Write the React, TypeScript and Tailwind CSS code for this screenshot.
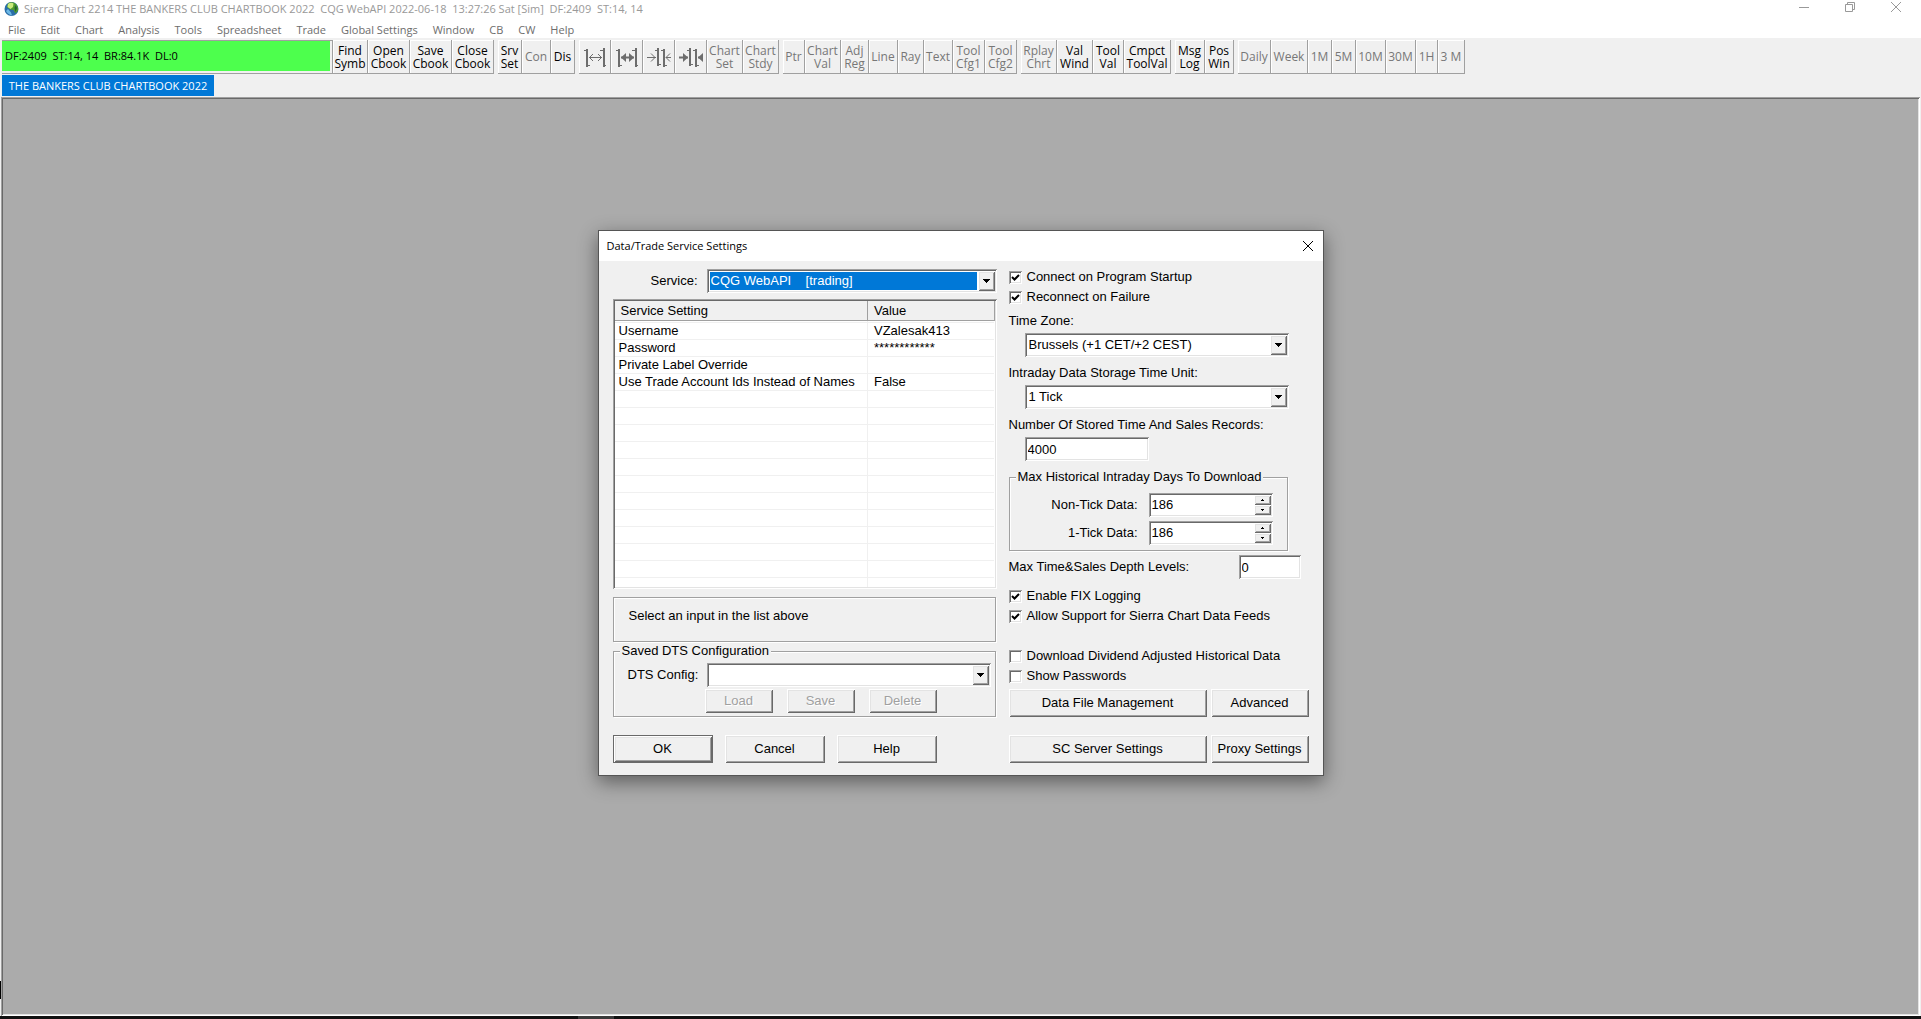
import { useState } from 'react';
import type { ReactNode } from 'react';

const SUNKEN =
  'p-[2px] bg-white shadow-[inset_1px_1px_#a0a0a0,inset_-1px_-1px_#ffffff,inset_2px_2px_#696969,inset_-2px_-2px_#e3e3e3]';
const RAISED =
  'bg-[#f0f0f0] shadow-[inset_1px_1px_#ffffff,inset_-1px_-1px_#696969,inset_2px_2px_#e3e3e3,inset_-2px_-2px_#a0a0a0]';
const ETCHED = 'border border-[#a0a0a0] shadow-[inset_1px_1px_#ffffff,1px_1px_#ffffff]';

interface ToolItem {
  label: string;
  width: string;
  active?: boolean;
  icon?: ReactNode;
}

const menuItems = [
  'File', 'Edit', 'Chart', 'Analysis', 'Tools', 'Spreadsheet', 'Trade',
  'Global Settings', 'Window', 'CB', 'CW', 'Help',
];

function BarsIcon({ inward, bold }: { inward?: boolean; bold?: boolean }) {
  return (
    <svg width="27" height="24" viewBox="0 0 27 24" fill="none" stroke="#6d6d6d" className="shrink-0">
      {inward ? (
        <>
          <path d="M13 3v18M19 4v18" strokeWidth="2" />
          <path d="M10 5.5h2M14 19.5h2M16 5.5h2M20 20.5h2" />
          <path d="M2 12.500h9M21 12.500h5" strokeWidth={bold ? 2 : 1} />
          {bold ? (
            <path d="M6 8l5 4.500l-5 4.500zM26 8l-5 4.500l5 4.500z" fill="#6d6d6d" stroke="none" />
          ) : (
            <path d="M6 8.500l4 4l-4 4M25 8.500l-4 4l4 4" />
          )}
        </>
      ) : (
        <>
          <path d="M6 4v18M23 3v19" strokeWidth="2" />
          <path d="M3 5.500h2M7 20.500h2M19 5.500h3M24 20.500h1" />
          <path d="M8 12.500h13" strokeWidth={bold ? 2 : 1} />
          {bold ? (
            <path d="M13 8l-5 4.500l5 4.500zM16 8l5 4.500l-5 4.500z" fill="#6d6d6d" stroke="none" />
          ) : (
            <path d="M12 9l-3.500 3.500l3.500 3.500M17 9l3.500 3.500l-3.500 3.500" />
          )}
        </>
      )}
    </svg>
  );
}

const toolGroups: ToolItem[][] = [
  [
    { label: 'Find\nSymb', width: 'w-[35px]', active: true },
    { label: 'Open\nCbook', width: 'w-[42px]', active: true },
    { label: 'Save\nCbook', width: 'w-[42px]', active: true },
    { label: 'Close\nCbook', width: 'w-[42px]', active: true },
  ],
  [
    { label: 'Srv\nSet', width: 'w-[24px]', active: true },
    { label: 'Con', width: 'w-[29px]' },
    { label: 'Dis', width: 'w-[24px]', active: true },
  ],
  [
    { label: 'Increase bar spacing', width: 'w-[32px]', icon: <BarsIcon /> },
    { label: 'Increase bar spacing more', width: 'w-[32px]', icon: <BarsIcon bold /> },
    { label: 'Decrease bar spacing', width: 'w-[32px]', icon: <BarsIcon inward /> },
    { label: 'Decrease bar spacing more', width: 'w-[32px]', icon: <BarsIcon inward bold /> },
    { label: 'Chart\nSet', width: 'w-[36px]' },
    { label: 'Chart\nStdy', width: 'w-[36px]' },
  ],
  [
    { label: 'Ptr', width: 'w-[22px]' },
    { label: 'Chart\nVal', width: 'w-[36px]' },
    { label: 'Adj\nReg', width: 'w-[28px]' },
    { label: 'Line', width: 'w-[29px]' },
    { label: 'Ray', width: 'w-[26px]' },
    { label: 'Text', width: 'w-[29px]' },
    { label: 'Tool\nCfg1', width: 'w-[32px]' },
    { label: 'Tool\nCfg2', width: 'w-[32px]' },
  ],
  [
    { label: 'Rplay\nChrt', width: 'w-[36px]' },
    { label: 'Val\nWind', width: 'w-[36px]', active: true },
    { label: 'Tool\nVal', width: 'w-[31px]', active: true },
    { label: 'Cmpct\nToolVal', width: 'w-[47px]', active: true },
  ],
  [
    { label: 'Msg\nLog', width: 'w-[30px]', active: true },
    { label: 'Pos\nWin', width: 'w-[29px]', active: true },
  ],
  [
    { label: 'Daily', width: 'w-[33px]' },
    { label: 'Week', width: 'w-[37px]' },
    { label: '1M', width: 'w-[24px]' },
    { label: '5M', width: 'w-[24px]' },
    { label: '10M', width: 'w-[30px]' },
    { label: '30M', width: 'w-[30px]' },
    { label: '1H', width: 'w-[22px]' },
    { label: '3 M', width: 'w-[27px]' },
  ],
];

const settings = [
  ['Username', 'VZalesak413'],
  ['Password', '************'],
  ['Private Label Override', ''],
  ['Use Trade Account Ids Instead of Names', 'False'],
];

function GlobeIcon() {
  return (
    <svg width="15" height="16" viewBox="0 0 15 16">
      <circle cx="7.500" cy="8" r="7" fill="#2a6ea8" />
      <path d="M2 10c1 2 3 4 6 4.500l-1-3L4 8z" fill="#6cb8e6" />
      <path d="M4 2.500C6 1 9 1 11 2.200C13.500 4 14.500 7 14 9.500l-2.500 3L9.500 9L6 8.500L3 6z" fill="#4f9c2c" />
      <path d="M4 3c2-1.500 4-1.500 5.500-.5L9 6L6.500 8L3.500 6z" fill="#c9ea7c" />
      <path d="M11.500 4l1.500 3l-1.500 4l-1-4z" fill="#1f6034" />
    </svg>
  );
}

function TitleBar() {
  return (
    <div className="flex h-[18px] items-center bg-white pl-1 pr-[2px] text-[#999999]">
      <GlobeIcon />
      <span className="ml-[5px] flex-1 whitespace-pre">
        Sierra Chart 2214 THE BANKERS CLUB CHARTBOOK 2022{'  '}CQG WebAPI 2022-06-18{'  '}13:27:26 Sat [Sim]{'  '}DF:2409{'  '}ST:14, 14
      </span>
      <button aria-label="Minimize" className="flex w-[46px] justify-center pb-1">
        <svg width="10" height="10" stroke="#999999"><path d="M0 5.500h10" /></svg>
      </button>
      <button aria-label="Restore" className="flex w-[46px] justify-center pb-1">
        <svg width="10" height="10" fill="none" stroke="#999999">
          <path d="M.5 2.500h7v7h-7zM2.500 2.500v-2h7v7h-2" />
        </svg>
      </button>
      <button aria-label="Close" className="flex w-[46px] justify-center pb-1">
        <svg width="10" height="10" stroke="#999999"><path d="M0 0l10 10M10 0l-10 10" /></svg>
      </button>
    </div>
  );
}

function Toolbar() {
  return (
    <div className="flex h-[37px] items-start pl-[2px] pt-[2px]">
      <div className="h-[34px] w-[331px] shrink-0 border-b border-r border-t border-[#a0a0a0] pb-[2px] pr-[2px]">
        <div className="flex h-full items-center whitespace-pre bg-[#4dff4d] pl-[3px] text-black">
          DF:2409{'  '}ST:14, 14{'  '}BR:84.1K{'  '}DL:0
        </div>
      </div>
      <div className="flex gap-1">
        {toolGroups.map((group, index) => (
          <div key={index} className="flex">
            {group.map((item) => (
              <button
                key={item.label}
                aria-label={item.label.replace('\n', ' ')}
                className={`flex h-[34px] items-center justify-center whitespace-pre border-b border-r border-[#a0a0a0] text-center text-[12px] leading-[13px] shadow-[inset_1px_1px_#ffffff] ${item.width} ${
                  item.active ? 'text-black' : 'text-[#777777]'
                }`}
              >
                {item.icon ?? item.label}
              </button>
            ))}
          </div>
        ))}
      </div>
    </div>
  );
}

function Combo({ id, options, selected, className }: { id: string; options: string[]; selected?: boolean; className: string }) {
  return (
    <div className={`flex h-6 ${SUNKEN} ${className}`}>
      <select
        id={id}
        className={`my-px ml-px min-w-0 flex-1 appearance-none whitespace-pre rounded-none px-px outline-none ${
          selected ? 'bg-[#0078d7] text-white' : 'bg-white'
        }`}
      >
        {options.map((option) => (
          <option key={option}>{option}</option>
        ))}
      </select>
      <span className={`pointer-events-none ml-px flex w-[17px] items-center justify-center ${RAISED}`}>
        <svg width="7" height="4" shapeRendering="crispEdges"><path d="M0 0h7L3.500 4z" /></svg>
      </span>
    </div>
  );
}

function TextBox({ id, value, className }: { id: string; value: string; className: string }) {
  return <input id={id} type="text" defaultValue={value} className={`h-6 px-[3px] outline-none ${SUNKEN} ${className}`} />;
}

function Spinner({ id, label }: { id: string; label: string }) {
  const [value, setValue] = useState(186);

  return (
    <div className="flex items-center justify-end">
      <label htmlFor={id} className="mr-[11px]">{label}</label>
      <div className={`flex h-6 w-[124px] ${SUNKEN}`}>
        <input
          id={id}
          type="text"
          value={value}
          onChange={(e) => setValue(Number(e.target.value) || 0)}
          className="min-w-0 flex-1 pl-px outline-none"
        />
        <div className="flex w-[17px] flex-col">
          <button aria-label="Increase" onClick={() => setValue(value + 1)} className={`flex flex-1 items-center justify-center ${RAISED}`}>
            <svg width="3" height="2" shapeRendering="crispEdges"><path d="M1 0h1v1H1zM0 1h3v1H0z" /></svg>
          </button>
          <button aria-label="Decrease" onClick={() => setValue(value - 1)} className={`flex flex-1 items-center justify-center ${RAISED}`}>
            <svg width="3" height="2" shapeRendering="crispEdges"><path d="M0 0h3v1H0zM1 1h1v1H1z" /></svg>
          </button>
        </div>
      </div>
    </div>
  );
}

function CheckBox({ label, checked }: { label: string; checked?: boolean }) {
  return (
    <label className="flex h-5 items-center gap-[5px]">
      <span className="grid">
        <input
          type="checkbox"
          defaultChecked={checked}
          className={`peer col-start-1 row-start-1 size-[13px] appearance-none ${SUNKEN}`}
        />
        <svg
          width="13"
          height="13"
          fill="none"
          stroke="black"
          strokeWidth="2"
          className="pointer-events-none invisible col-start-1 row-start-1 peer-checked:visible"
        >
          <path d="M3 6l2.500 2.500L10 4" />
        </svg>
      </span>
      {label}
    </label>
  );
}

function PushButton({ label, className, disabled }: { label: string; className: string; disabled?: boolean }) {
  return (
    <button
      disabled={disabled}
      className={`whitespace-nowrap ${RAISED} ${className} ${disabled ? 'text-[#a0a0a0] text-shadow-[1px_1px_#ffffff]' : ''}`}
    >
      {label}
    </button>
  );
}

function SettingsTable() {
  const rows = [...settings, ...Array.from({ length: 11 }, () => ['', ''])];

  return (
    <div className={`mt-[6px] h-[290px] overflow-hidden ${SUNKEN}`}>
      <table className="w-full table-fixed border-collapse text-left leading-4">
        <thead>
          <tr className="h-[19px] bg-[#f0f0f0]">
            <th className="w-[253px] border-b border-r border-[#a0a0a0] p-0 pl-[6px] pt-px font-normal">Service Setting</th>
            <th className="border-b border-r border-[#a0a0a0] p-0 pl-[6px] pt-px font-normal">Value</th>
          </tr>
        </thead>
        <tbody>
          <tr className="h-[2px]">
            <td className="border-b border-r border-[#f0f0f0] p-0" />
            <td className="border-b border-[#f0f0f0] p-0" />
          </tr>
          {rows.map(([name, value], index) => (
            <tr key={index} className="h-[17px]">
              <td className="whitespace-nowrap border-b border-r border-[#f0f0f0] p-0 pl-1">{name}</td>
              <td className="border-b border-[#f0f0f0] p-0 pl-[6px]">{value}</td>
            </tr>
          ))}
          <tr className="h-[10px]">
            <td className="border-r border-[#f0f0f0] p-0" />
            <td className="p-0" />
          </tr>
        </tbody>
      </table>
    </div>
  );
}

function ServiceSettingsDialog() {
  return (
    <div
      role="dialog"
      aria-label="Data/Trade Service Settings"
      className="w-[726px] border border-[#555555] bg-[#f0f0f0] text-black shadow-[0_6px_18px_rgba(0,0,0,0.45)]"
    >
      <div className="flex h-[30px] items-center justify-between bg-white pl-2 pr-[10px]">
        <h1>Data/Trade Service Settings</h1>
        <button aria-label="Close dialog">
          <svg width="10" height="10" stroke="black"><path d="M0 0l10 10M10 0l-10 10" /></svg>
        </button>
      </div>

      <div className="flex gap-3 px-[14px] pb-3 font-['Liberation_Sans',Arial,sans-serif] text-[13px] leading-4">
        {/* Service and its inputs */}
        <div className="w-[384px] pt-2">
          <div className="flex items-center justify-end">
            <label htmlFor="service" className="mr-[9px]">Service:</label>
            <Combo id="service" options={['CQG WebAPI\u00a0\u00a0\u00a0\u00a0[trading]']} selected className="w-[290px]" />
          </div>
          <SettingsTable />
          <div className={`mr-px mt-2 h-[45px] px-[15px] pt-[10px] ${ETCHED}`}>Select an input in the list above</div>

          <fieldset className={`mr-px mt-px h-[74px] pl-[14px] pr-1 ${ETCHED}`}>
            <legend className="-ml-2 bg-[#f0f0f0] px-[2px]">Saved DTS Configuration</legend>
            <div className="mt-1 flex items-center justify-between">
              <label htmlFor="dts-config">DTS Config:</label>
              <Combo id="dts-config" options={['']} className="w-[284px]" />
            </div>
            <div className="ml-[77px] mt-[2px] flex gap-[14px]">
              <PushButton label="Load" className="h-6 w-[68px]" disabled />
              <PushButton label="Save" className="h-6 w-[68px]" disabled />
              <PushButton label="Delete" className="h-6 w-[68px]" disabled />
            </div>
          </fieldset>

          <div className="mt-[18px] flex gap-3">
            <button className="h-7 w-[100px] border border-[#696969] bg-[#f0f0f0] shadow-[inset_1px_1px_#ffffff,inset_-1px_-1px_#696969,inset_2px_2px_#e3e3e3,inset_-2px_-2px_#a0a0a0]">
              OK
            </button>
            <PushButton label="Cancel" className="h-7 w-[100px]" />
            <PushButton label="Help" className="h-7 w-[100px]" />
          </div>
        </div>

        {/* Connection and storage options */}
        <div className="flex-1 pt-[6px]">
          <CheckBox label="Connect on Program Startup" checked />
          <CheckBox label="Reconnect on Failure" checked />

          <label htmlFor="time-zone" className="mt-[6px] block">Time Zone:</label>
          <Combo id="time-zone" options={['Brussels (+1 CET/+2 CEST)']} className="ml-4 mt-1 w-[264px]" />

          <label htmlFor="time-unit" className="mt-2 block">Intraday Data Storage Time Unit:</label>
          <Combo id="time-unit" options={['1 Tick']} className="ml-4 mt-1 w-[264px]" />

          <label htmlFor="records" className="mt-2 block">Number Of Stored Time And Sales Records:</label>
          <TextBox id="records" value="4000" className="ml-4 mt-1 block w-[124px]" />

          <fieldset className={`mt-2 h-[82px] w-[279px] pr-[14px] ${ETCHED}`}>
            <legend className="ml-[6px] bg-[#f0f0f0] px-[2px]">Max Historical Intraday Days To Download</legend>
            <div className="flex flex-col gap-1 pt-2">
              <Spinner id="non-tick" label="Non-Tick Data:" />
              <Spinner id="one-tick" label="1-Tick Data:" />
            </div>
          </fieldset>

          <div className="mt-1 flex items-center justify-between pr-2">
            <label htmlFor="depth-levels">Max Time&amp;Sales Depth Levels:</label>
            <TextBox id="depth-levels" value="0" className="w-[62px]" />
          </div>

          <div className="mt-[7px]">
            <CheckBox label="Enable FIX Logging" checked />
            <CheckBox label="Allow Support for Sierra Chart Data Feeds" checked />
          </div>
          <div className="mt-5">
            <CheckBox label="Download Dividend Adjusted Historical Data" />
            <CheckBox label="Show Passwords" />
          </div>

          <div className="mt-[3px] flex gap-1">
            <PushButton label="Data File Management" className="h-7 w-[198px]" />
            <PushButton label="Advanced" className="h-7 w-[98px]" />
          </div>
          <div className="mt-[18px] flex gap-1">
            <PushButton label="SC Server Settings" className="h-7 w-[198px]" />
            <PushButton label="Proxy Settings" className="h-7 w-[98px]" />
          </div>
        </div>
      </div>
    </div>
  );
}

export default function App() {
  return (
    <div className="relative flex min-h-screen flex-col bg-[#f0f0f0] font-['Open_Sans','Segoe_UI',sans-serif] text-[11px] leading-4">
      <TitleBar />
      <nav className="flex h-5 items-center gap-px bg-white pl-px pt-[3px] text-[#6d6d6d]">
        {menuItems.map((item) => (
          <button key={item} className="px-[7px]">{item}</button>
        ))}
      </nav>
      <Toolbar />
      <div className="flex pl-[2px]">
        <button className="h-[21px] w-[212px] whitespace-nowrap bg-[#0078d7] text-white">THE BANKERS CLUB CHARTBOOK 2022</button>
      </div>
      <main className="ml-px mr-px mt-px flex flex-1 items-start justify-center bg-[#ababab] pt-[133px] shadow-[inset_1px_1px_#a0a0a0,inset_-1px_-1px_#ffffff,inset_2px_2px_#696969,inset_-2px_-2px_#e3e3e3]">
        <ServiceSettingsDialog />
      </main>
      {/* Edge of the desktop taskbar */}
      <div className="flex h-[3px] bg-[#111111]">
        <div className="ml-[578px] w-9 bg-[#3a3a3a]" />
      </div>
      {/* Sliver of the window behind */}
      <div className="absolute bottom-5 left-0 h-[18px] w-px bg-black" />
    </div>
  );
}
